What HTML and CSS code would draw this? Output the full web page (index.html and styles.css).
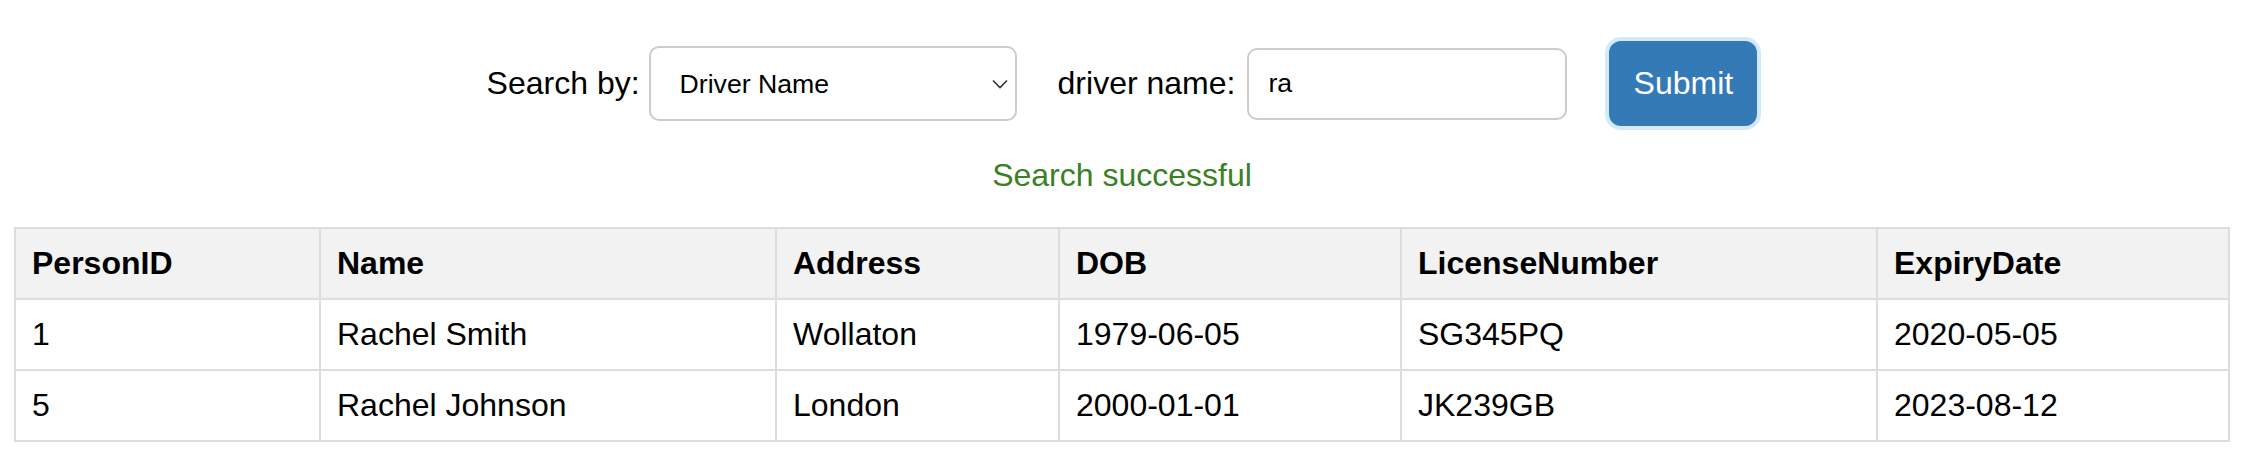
FILE: index.html
```html
<!DOCTYPE html>
<html lang="en">
<head>
<meta charset="utf-8">
<title>Search drivers</title>
<link rel="stylesheet" href="styles.css">
</head>
<body>
<div class="page">
  <form class="search-form" onsubmit="return false;">
    <label class="field-label label-search" for="searchBy">Search by:</label>
    <div class="select-wrap">
      <select id="searchBy" class="select">
        <option>Driver Name</option>
        <option>License Number</option>
      </select>
      <svg class="chevron" width="16" height="10" viewBox="0 0 16 10" aria-hidden="true"><path d="M1 1.5 L8 8.5 L15 1.5" fill="none" stroke="#333" stroke-width="1.6"/></svg>
    </div>
    <label class="field-label label-name" for="driverName">driver name:</label>
    <input id="driverName" class="text-input" type="text" value="ra">
    <button class="submit-btn" type="submit">Submit</button>
  </form>
  <p class="message">Search successful</p>
  <table class="results">
    <colgroup>
      <col class="c1"><col class="c2"><col class="c3"><col class="c4"><col class="c5"><col class="c6">
    </colgroup>
    <thead>
      <tr><th>PersonID</th><th>Name</th><th>Address</th><th>DOB</th><th>LicenseNumber</th><th>ExpiryDate</th></tr>
    </thead>
    <tbody>
      <tr><td>1</td><td>Rachel Smith</td><td>Wollaton</td><td>1979-06-05</td><td>SG345PQ</td><td>2020-05-05</td></tr>
      <tr><td>5</td><td>Rachel Johnson</td><td>London</td><td>2000-01-01</td><td>JK239GB</td><td>2023-08-12</td></tr>
    </tbody>
  </table>
</div>
</body>
</html>
```

FILE: styles.css
```css
* { box-sizing: border-box; }
html, body { margin: 0; padding: 0; background: #fff; }
body {
  font-family: "Liberation Sans", Arial, Helvetica, sans-serif;
  color: #000;
}
.page {
  padding: 41px 16px 0 14px;
}
.search-form {
  display: flex;
  justify-content: center;
  align-items: center;
  height: 85px;
  margin: 0;
  padding-left: 2px;
}
.field-label {
  font-size: 32px;
  line-height: 37px;
}
.label-search { margin-right: 9px; }
.label-name { margin-left: 41px; margin-right: 12px; }
.select-wrap {
  position: relative;
  width: 368px;
  height: 75px;
}
.select {
  appearance: none;
  -webkit-appearance: none;
  width: 100%;
  height: 100%;
  border: 2px solid #cccccc;
  border-radius: 10px;
  background: #fff;
  font-family: "Liberation Sans", Arial, sans-serif;
  font-size: 26.67px;
  color: #000;
  padding: 0 40px 0 29px;
  margin: 0;
}
.chevron {
  position: absolute;
  right: 9px;
  top: 33px;
  pointer-events: none;
}
.text-input {
  width: 320px;
  height: 72px;
  border: 2px solid #cccccc;
  border-radius: 10px;
  font-family: "Liberation Sans", Arial, sans-serif;
  font-size: 26.67px;
  color: #000;
  padding: 0 19px;
  margin: 0;
  outline: none;
}
.submit-btn {
  margin-left: 42px;
  width: 148px;
  height: 85px;
  border: none;
  border-radius: 12px;
  background: #337ab7;
  color: #fff;
  font-family: "Liberation Sans", Arial, sans-serif;
  font-size: 32px;
  box-shadow: 0 0 0 4px #d3eaf7;
  padding: 0;
}
.message {
  margin: 31px 0 0;
  text-align: center;
  font-size: 32px;
  line-height: 37px;
  color: #3a8024;
  padding-left: 2px;
}
.results {
  margin-top: 33px;
  width: 2214px;
  border-collapse: collapse;
  table-layout: fixed;
}
.c1 { width: 305px; }
.c2 { width: 456px; }
.c3 { width: 283px; }
.c4 { width: 342px; }
.c5 { width: 476px; }
.c6 { width: 352px; }
.results th, .results td {
  border: 2px solid #dddddd;
  padding: 16px;
  font-size: 32px;
  line-height: 37px;
  text-align: left;
  white-space: nowrap;
}
.results th {
  background: #f2f2f2;
  font-weight: bold;
}
```
